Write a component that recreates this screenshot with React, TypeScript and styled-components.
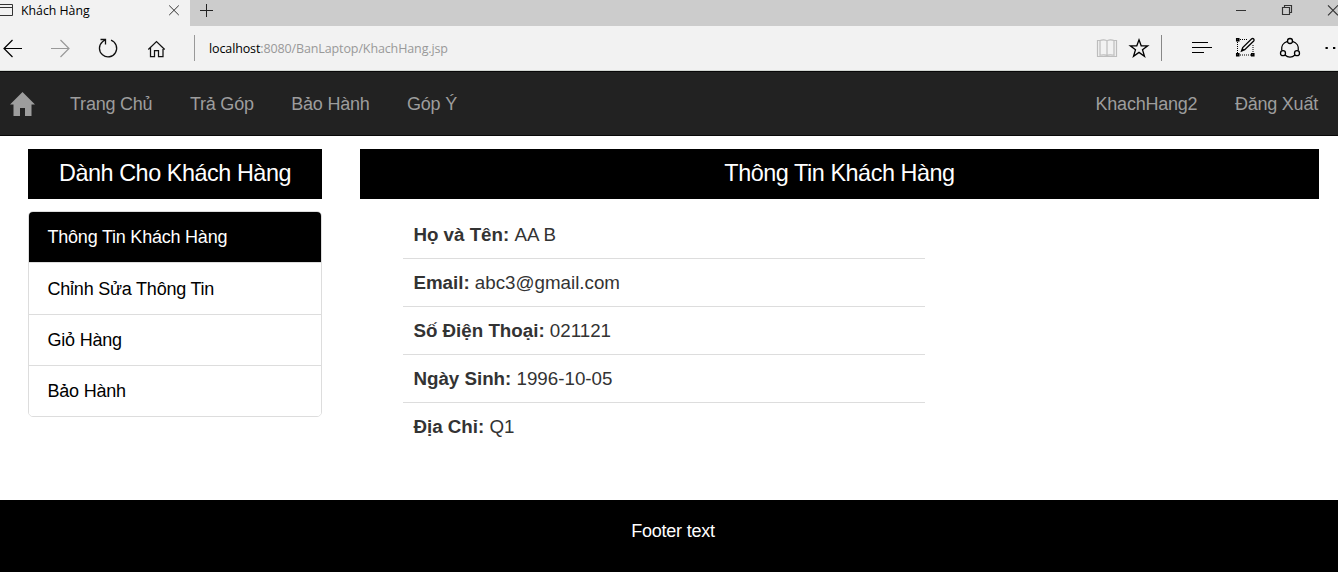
import React from "react";
import styled, { createGlobalStyle } from "styled-components";

const GlobalStyle = createGlobalStyle`
  *, *::before, *::after { box-sizing: border-box; }
  body {
    margin: 0;
    background: #fff;
    color: #333;
    font-family: Arial, "Liberation Sans", sans-serif;
    font-size: 18px;
    letter-spacing: -0.22px;
    overflow: hidden;
  }
`;

const Page = styled.div`
  display: flex;
  flex-direction: column;
  height: 572px;
  overflow: hidden;
  white-space: nowrap;
`;

const TabStrip = styled.div`
  display: flex;
  justify-content: space-between;
  height: 26px;
  background: #ccc;
`;

const Tabs = styled.div`
  display: flex;
`;

const Tab = styled.div`
  display: flex;
  width: 190px;
  background: #f2f2f2;
  font: 12.3px/21px "Open Sans", "Noto Sans", sans-serif;
  letter-spacing: 0;
  color: #000;
`;

const TabTitle = styled.span`
  width: 146px;
  margin-left: 7px;
`;

const Icon = styled.svg`
  display: block;
  flex: none;
  fill: none;
  stroke: currentColor;
`;

const AddressBar = styled.div`
  display: flex;
  justify-content: space-between;
  height: 45px;
  background: #f2f2f2;
  border-bottom: 1px solid #d2d6d2;
  color: #000;
`;

const BarGroup = styled.div`
  display: flex;
`;

const Address = styled.span`
  margin-left: 1px;
  font: 12.5px/45px "Open Sans", "Noto Sans", sans-serif;
  letter-spacing: -0.12px;
  color: #999;
`;

const Host = styled.span`
  color: #000;
`;

const NavBar = styled.nav`
  display: flex;
  justify-content: space-between;
  height: 65px;
  padding: 0 20px 0 10px;
  background: #222;
  border: solid #080808;
  border-width: 1px 0;
  color: #9d9d9d;
  line-height: 64px;
`;

const NavGroup = styled.div<{ $indent?: number }>`
  display: flex;
  gap: 37.5px;
  margin-left: ${({ $indent }) => $indent ?? 0}px;
`;

const NavStart = styled.div`
  display: flex;
`;

const Brand = styled.a`
  display: flex;
  padding-top: 20px;
`;

const NavLink = styled.a`
  color: #9d9d9d;
`;

const Main = styled.main`
  display: flex;
  gap: 38px;
  height: 364px;
  padding: 13px 19px 0 28px;
`;

const Sidebar = styled.aside`
  width: 294px;
`;

const Content = styled.section`
  flex: 1;
`;

const Heading = styled.h3`
  height: 50px;
  margin: 0;
  background: #000;
  color: #fff;
  font-size: 23.4px;
  font-weight: 400;
  letter-spacing: -0.45px;
  line-height: 48px;
  text-align: center;
`;

const Menu = styled.ul`
  margin: 12px 0 0;
  padding: 0;
  list-style: none;
  border: 1px solid #ddd;
  border-radius: 5px;
  overflow: hidden;
`;

const MenuItem = styled.li<{ $active?: boolean }>`
  height: ${({ $active }) => ($active ? 50 : 51)}px;
  padding-left: 18.5px;
  line-height: 50px;
  color: ${({ $active }) => ($active ? "#fff" : "#000")};
  background: ${({ $active }) => ($active ? "#000" : "#fff")};

  & + & {
    border-top: 1px solid #ddd;
  }
  &:nth-child(2) {
    height: 52px;
    line-height: 52px;
  }
`;

const Details = styled.dl`
  width: 522px;
  margin: 12px 0 0 43px;
  font-size: 18.75px;
  letter-spacing: 0;
`;

const DetailRow = styled.div`
  display: flex;
  gap: 5.2px;
  height: 48px;
  padding-left: 10.4px;
  line-height: 47px;
  border-bottom: 1px solid #ddd;

  &:last-child {
    border-bottom: 0;
  }
`;

const Label = styled.dt`
  font-weight: 700;
`;

const Value = styled.dd`
  margin: 0;
`;

const Footer = styled.footer`
  height: 72px;
  padding-left: 8px;
  background: #000;
  color: #fff;
  line-height: 62px;
  text-align: center;
`;

const menu = ["Thông Tin Khách Hàng", "Chỉnh Sửa Thông Tin", "Giỏ Hàng", "Bảo Hành"];

const details = [
  ["Họ và Tên:", "AA B"],
  ["Email:", "abc3@gmail.com"],
  ["Số Điện Thoại:", "021121"],
  ["Ngày Sinh:", "1996-10-05"],
  ["Địa Chỉ:", "Q1"],
];

const Browser = () => (
  <>
    <TabStrip>
      <Tabs>
        <Tab>
          <Icon width="14" height="26">
            <path d="M-1 4.5H12.5V15.5H-1M0 7.5H12" stroke="#333" />
          </Icon>
          <TabTitle>Khách Hàng</TabTitle>
          <Icon width="14" height="26">
            <path d="M2.2 5.500l9.600 9.600M11.800 5.500l-9.600 9.600" stroke="#333" />
          </Icon>
        </Tab>
        <Icon width="30" height="26">
          <path d="M10 10.5h13M16.5 4v13" stroke="#222" />
        </Icon>
      </Tabs>
      <Icon width="108" height="26" stroke="#000">
        <path d="M6 10.500h10" />
        <path d="M52.500 7.500h7v7h-7zM54.500 7.500v-2h7v7h-2" strokeWidth="1.150" />
        <path d="M98 5.300l10 10M108 5.300l-10 10" strokeWidth="1.150" />
      </Icon>
    </TabStrip>
    <AddressBar>
      <BarGroup>
        <Icon width="208" height="44">
          <path d="M22 22.500H4M12.500 14l-8.500 8.500 8.500 8.500" stroke="#000" strokeWidth="1.200" />
          <path d="M51 22.500h18M60.500 14l8.500 8.500-8.500 8.500" stroke="#999" strokeWidth="1.200" />
          <path d="M111 14.200A8.600 8.600 0 1 1 102.500 15.700L105.300 13.700M100.500 13.500h5v5" stroke="#111" strokeWidth="1.300" />
          <path d="M148.300 23.500l8.200-8 8.200 8M150.500 21.500v9h4v-6h4v6h4.500v-9" stroke="#111" strokeWidth="1.250" />
          <path d="M194.500 9v26" stroke="#999" />
        </Icon>
        <Address><Host>localhost</Host>:8080/BanLaptop/KhachHang.jsp</Address>
      </BarGroup>
      <Icon width="248" height="44" stroke="#111">
        <path d="M9.500 14.500h-2v16h19v-16h-2M17 29.500V15c-1-1.300-5-1.300-7-.5v14.700c2-.6 6-.6 7 .3 1-.9 5-.9 7-.3V14.500c-2-.8-6-.8-7 .5" stroke="#bdbdbd" strokeWidth="1.200" />
        <path d="M49 13.800l2.200 6h6.500l-5.200 4 2 6.500-5.500-3.900-5.500 3.900 2-6.500-5.200-4h6.500z" strokeWidth="1.300" />
        <path d="M71.500 9v26" stroke="#888" />
        <path d="M102 16.500h16M102 21.500h20M102 26.500h12" stroke="#000" strokeWidth="1.200" />
        <path d="M150 13.500h8M147.500 16v11M150 29h11M163 19v8" strokeDasharray="1 1" />
        <path d="M146.750 12.750h2v2h-2zM146.750 27.750h2v2h-2zM161.750 27.750h2v2h-2z" strokeWidth="1.600" />
        <path d="M151.500 25l1.200-3.500 9-8.700c1.500-1 3.200.7 2 2.200l-9 8.700zM151.500 25l2-2" strokeWidth="1.300" />
        <circle cx="200" cy="15" r="2.500" strokeWidth="1.300" />
        <circle cx="193" cy="27.200" r="2.500" strokeWidth="1.300" />
        <circle cx="207" cy="27.200" r="2.500" strokeWidth="1.300" />
        <path d="M197.500 15.300c-4.300 1.200-6.500 5-5.800 9.200M202.500 15.300c4.300 1.200 6.500 5 5.800 9.200M195 29c3 2.700 7 2.700 10 0" strokeWidth="1.300" />
        <path d="M235.500 22h2.300M243 22h2.300" stroke="#000" strokeWidth="2" />
      </Icon>
    </AddressBar>
  </>
);

export default function App() {
  return (
    <>
      <GlobalStyle />
      <Page>
        <Browser />
        <NavBar>
          <NavStart>
            <Brand>
              <Icon width="25" height="25">
                <path d="M12.500 0L25 12.500h-3.500V24H15v-8h-5v8H3.500V12.500H0z" fill="#9d9d9d" stroke="none" />
              </Icon>
            </Brand>
            <NavGroup $indent={35}>
              <NavLink>Trang Chủ</NavLink>
              <NavLink>Trả Góp</NavLink>
              <NavLink>Bảo Hành</NavLink>
              <NavLink>Góp Ý</NavLink>
            </NavGroup>
          </NavStart>
          <NavGroup>
            <NavLink>KhachHang2</NavLink>
            <NavLink>Đăng Xuất</NavLink>
          </NavGroup>
        </NavBar>
        <Main>
          <Sidebar>
            <Heading>Dành Cho Khách Hàng</Heading>
            <Menu>
              {menu.map((item, i) => (
                <MenuItem key={item} $active={i === 0}>{item}</MenuItem>
              ))}
            </Menu>
          </Sidebar>
          <Content>
            <Heading>Thông Tin Khách Hàng</Heading>
            <Details>
              {details.map(([label, value]) => (
                <DetailRow key={label}>
                  <Label>{label}</Label>
                  <Value>{value}</Value>
                </DetailRow>
              ))}
            </Details>
          </Content>
        </Main>
        <Footer>Footer text</Footer>
      </Page>
    </>
  );
}
